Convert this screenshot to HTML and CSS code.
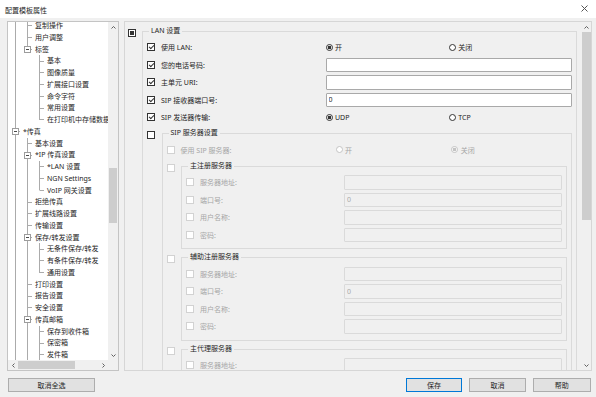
FILE: index.html
```html
<!DOCTYPE html>
<html lang="zh-CN">
<head>
    <meta charset="UTF-8">
    <title>配置模板属性</title>
    <link rel="stylesheet" href="styles.css">
</head>
<body>
<div class="window">
    <div class="titlebar">
        <span>配置模板属性</span>
        <svg class="close" width="7" height="7" viewBox="0 0 7 7"><path d="M0.5 0.5L6.5 6.5M6.5 0.5L0.5 6.5" stroke="#555" stroke-width="1"/></svg>
    </div>

    <div class="main">
        <!-- left: template tree -->
        <div class="tree">
            <div class="tree-view">
                <div class="tree-list">
                    <div class="tn"><i class="g v"></i><i class="c mid"></i><span>复制操作</span></div>
                    <div class="tn"><i class="g v"></i><i class="c mid"></i><span>用户调整</span></div>
                    <div class="tn"><i class="g v"></i><i class="c end exp"><b></b></i><span>标签</span></div>
                    <div class="tn"><i class="g v"></i><i class="g"></i><i class="c mid"></i><span>基本</span></div>
                    <div class="tn"><i class="g v"></i><i class="g"></i><i class="c mid"></i><span>图像质量</span></div>
                    <div class="tn"><i class="g v"></i><i class="g"></i><i class="c mid"></i><span>扩展接口设置</span></div>
                    <div class="tn"><i class="g v"></i><i class="g"></i><i class="c mid"></i><span>命令字符</span></div>
                    <div class="tn"><i class="g v"></i><i class="g"></i><i class="c mid"></i><span>常用设置</span></div>
                    <div class="tn"><i class="g v"></i><i class="g"></i><i class="c end"></i><span>在打印机中存储数据</span></div>
                    <div class="tn"><i class="c mid exp"><b></b></i><span>*传真</span></div>
                    <div class="tn"><i class="g v"></i><i class="c mid"></i><span>基本设置</span></div>
                    <div class="tn"><i class="g v"></i><i class="c mid exp"><b></b></i><span>*IP 传真设置</span></div>
                    <div class="tn"><i class="g v"></i><i class="g v"></i><i class="c mid"></i><span>*LAN 设置</span></div>
                    <div class="tn"><i class="g v"></i><i class="g v"></i><i class="c mid"></i><span>NGN Settings</span></div>
                    <div class="tn"><i class="g v"></i><i class="g v"></i><i class="c end"></i><span>VoIP 网关设置</span></div>
                    <div class="tn"><i class="g v"></i><i class="c mid"></i><span>拒绝传真</span></div>
                    <div class="tn"><i class="g v"></i><i class="c mid"></i><span>扩展线路设置</span></div>
                    <div class="tn"><i class="g v"></i><i class="c mid"></i><span>传输设置</span></div>
                    <div class="tn"><i class="g v"></i><i class="c mid exp"><b></b></i><span>保存/转发设置</span></div>
                    <div class="tn"><i class="g v"></i><i class="g v"></i><i class="c mid"></i><span>无条件保存/转发</span></div>
                    <div class="tn"><i class="g v"></i><i class="g v"></i><i class="c mid"></i><span>有条件保存/转发</span></div>
                    <div class="tn"><i class="g v"></i><i class="g v"></i><i class="c end"></i><span>通用设置</span></div>
                    <div class="tn"><i class="g v"></i><i class="c mid"></i><span>打印设置</span></div>
                    <div class="tn"><i class="g v"></i><i class="c mid"></i><span>报告设置</span></div>
                    <div class="tn"><i class="g v"></i><i class="c mid"></i><span>安全设置</span></div>
                    <div class="tn"><i class="g v"></i><i class="c mid exp"><b></b></i><span>传真邮箱</span></div>
                    <div class="tn"><i class="g v"></i><i class="g v"></i><i class="c mid"></i><span>保存到收件箱</span></div>
                    <div class="tn"><i class="g v"></i><i class="g v"></i><i class="c mid"></i><span>保密箱</span></div>
                    <div class="tn"><i class="g v"></i><i class="g v"></i><i class="c mid"></i><span>发件箱</span></div>
                </div>
            </div>
            <div class="vscroll">
                <div class="arrow"><svg width="5" height="3" viewBox="0 0 5 3"><path d="M0.5 2.5L2.5 0.5L4.5 2.5" fill="none" stroke="#606060"/></svg></div>
                <div class="track"><div class="thumb tree-thumb"></div></div>
                <div class="arrow"><svg width="5" height="3" viewBox="0 0 5 3"><path d="M0.5 0.5L2.5 2.5L4.5 0.5" fill="none" stroke="#606060"/></svg></div>
            </div>
            <div class="hscroll">
                <div class="arrow"><svg width="3" height="5" viewBox="0 0 3 5"><path d="M2.5 0.5L0.5 2.5L2.5 4.5" fill="none" stroke="#606060"/></svg></div>
                <div class="track"><div class="hthumb"></div></div>
                <div class="arrow"><svg width="3" height="5" viewBox="0 0 3 5"><path d="M0.5 0.5L2.5 2.5L0.5 4.5" fill="none" stroke="#606060"/></svg></div>
            </div>
            <div class="corner"></div>
        </div>

        <!-- right: settings of the selected node -->
        <div class="settings">
            <div class="settings-body">
                <div class="grouprow">
                    <span class="cb mixed"></span>
                    <div class="group">
                        <div class="group-title">LAN 设置</div>
                        <div class="group-body">
                            <div class="row">
                                <span class="cb on"></span>
                                <span class="label">使用 LAN:</span>
                                <div class="value v-lan radios">
                                    <span class="radio"><i class="dot on"></i>开</span>
                                    <span class="radio"><i class="dot"></i>关闭</span>
                                </div>
                            </div>
                            <div class="row">
                                <span class="cb on"></span>
                                <span class="label">您的电话号码:</span>
                                <input class="value v-lan field" type="text">
                            </div>
                            <div class="row">
                                <span class="cb on"></span>
                                <span class="label">主单元 URI:</span>
                                <input class="value v-lan field" type="text">
                            </div>
                            <div class="row">
                                <span class="cb on"></span>
                                <span class="label">SIP 接收器端口号:</span>
                                <input class="value v-lan field" type="text" value="0">
                            </div>
                            <div class="row">
                                <span class="cb on"></span>
                                <span class="label">SIP 发送器传输:</span>
                                <div class="value v-lan radios">
                                    <span class="radio"><i class="dot on"></i>UDP</span>
                                    <span class="radio"><i class="dot"></i>TCP</span>
                                </div>
                            </div>

                            <div class="grouprow">
                                <span class="cb"></span>
                                <div class="group">
                                    <div class="group-title">SIP 服务器设置</div>
                                    <div class="group-body">
                                        <div class="row off">
                                            <span class="cb"></span>
                                            <span class="label">使用 SIP 服务器:</span>
                                            <div class="value v-sip radios">
                                                <span class="radio"><i class="dot"></i>开</span>
                                                <span class="radio"><i class="dot on"></i>关闭</span>
                                            </div>
                                        </div>

                                        <div class="grouprow off">
                                            <span class="cb"></span>
                                            <div class="group">
                                                <div class="group-title">主注册服务器</div>
                                                <div class="group-body">
                                                    <div class="row"><span class="cb"></span><span class="label">服务器地址:</span><input class="value v-sub field" type="text" disabled></div>
                                                    <div class="row"><span class="cb"></span><span class="label">端口号:</span><input class="value v-sub field" type="text" value="0" disabled></div>
                                                    <div class="row"><span class="cb"></span><span class="label">用户名称:</span><input class="value v-sub field" type="text" disabled></div>
                                                    <div class="row"><span class="cb"></span><span class="label">密码:</span><input class="value v-sub field" type="password" disabled></div>
                                                </div>
                                            </div>
                                        </div>

                                        <div class="grouprow off">
                                            <span class="cb"></span>
                                            <div class="group">
                                                <div class="group-title">辅助注册服务器</div>
                                                <div class="group-body">
                                                    <div class="row"><span class="cb"></span><span class="label">服务器地址:</span><input class="value v-sub field" type="text" disabled></div>
                                                    <div class="row"><span class="cb"></span><span class="label">端口号:</span><input class="value v-sub field" type="text" value="0" disabled></div>
                                                    <div class="row"><span class="cb"></span><span class="label">用户名称:</span><input class="value v-sub field" type="text" disabled></div>
                                                    <div class="row"><span class="cb"></span><span class="label">密码:</span><input class="value v-sub field" type="password" disabled></div>
                                                </div>
                                            </div>
                                        </div>

                                        <div class="grouprow off">
                                            <span class="cb"></span>
                                            <div class="group">
                                                <div class="group-title">主代理服务器</div>
                                                <div class="group-body">
                                                    <div class="row"><span class="cb"></span><span class="label">服务器地址:</span><input class="value v-sub field" type="text" disabled></div>
                                                    <div class="row"><span class="cb"></span><span class="label">端口号:</span><input class="value v-sub field" type="text" value="0" disabled></div>
                                                    <div class="row"><span class="cb"></span><span class="label">用户名称:</span><input class="value v-sub field" type="text" disabled></div>
                                                    <div class="row"><span class="cb"></span><span class="label">密码:</span><input class="value v-sub field" type="password" disabled></div>
                                                </div>
                                            </div>
                                        </div>
                                    </div>
                                </div>
                            </div>
                        </div>
                    </div>
                </div>
            </div>
            <div class="vscroll">
                <div class="arrow"><svg width="5" height="3" viewBox="0 0 5 3"><path d="M0.5 2.5L2.5 0.5L4.5 2.5" fill="none" stroke="#606060"/></svg></div>
                <div class="track"><div class="thumb settings-thumb"></div></div>
                <div class="arrow"><svg width="5" height="3" viewBox="0 0 5 3"><path d="M0.5 0.5L2.5 2.5L4.5 0.5" fill="none" stroke="#606060"/></svg></div>
            </div>
        </div>
    </div>

    <div class="footer">
        <button class="btn btn-wide">取消全选</button>
        <button class="btn btn-default">保存</button>
        <button class="btn">取消</button>
        <button class="btn btn-last">帮助</button>
    </div>
</div>
</body>
</html>
```

FILE: styles.css
```css
* {
    box-sizing: border-box;
}
body {
    margin: 0;
    background-color: #f0f0f0;
    font-family: "Noto Sans", "Noto Sans CJK SC", sans-serif;
    font-size: 7px;
    color: #1e1e1e;
}
.window {
    width: 596px;
    height: 397px;
    overflow: hidden;
}
.titlebar {
    height: 18px;
    background-color: #fff;
    display: flex;
    align-items: center;
    justify-content: space-between;
    padding: 2px 8px 0 5px;
}
.titlebar .close {
    margin-bottom: 3px;
}
.main {
    display: flex;
    gap: 5px;
    padding: 3px 4px 0 7px;
    height: 353px;
}

/* tree */
.tree {
    --ln: #ababab;
    width: 112px;
    height: 350px;
    border: 1px solid #c4c4c4;
    background-color: #fff;
    display: grid;
    grid-template-columns: 1fr 10px;
    grid-template-rows: 1fr 10px;
}
.tree-view {
    overflow: hidden;
    min-height: 0;
}
.tree-list {
    margin-top: -2px;
}
.tn {
    display: flex;
    height: 11.75px;
    white-space: nowrap;
}
.tn i {
    flex: none;
    width: 12px;
}
.tn span {
    padding-left: 3px;
    line-height: 11.75px;
}
.g.v {
    background: linear-gradient(var(--ln), var(--ln)) 7px 0 / 1px 100% no-repeat;
}
.c.mid {
    background:
        linear-gradient(var(--ln), var(--ln)) 7px 0 / 1px 100% no-repeat,
        linear-gradient(var(--ln), var(--ln)) 8px 50% / 4px 1px no-repeat;
}
.c.end {
    background:
        linear-gradient(var(--ln), var(--ln)) 7px 0 / 1px 50% no-repeat,
        linear-gradient(var(--ln), var(--ln)) 8px 50% / 4px 1px no-repeat;
}
.c.exp {
    display: flex;
    align-items: center;
}
.c.exp b {
    width: 7px;
    height: 7px;
    margin-left: 4px;
    border: 1px solid #9c9c9c;
    background: linear-gradient(#4a4a4a, #4a4a4a) center / 3px 1px no-repeat, #fff;
}

/* scrollbars */
.vscroll {
    width: 10px;
    display: flex;
    flex-direction: column;
    background-color: #f0f0f0;
}
.hscroll {
    height: 10px;
    display: flex;
    background-color: #f0f0f0;
}
.corner {
    background-color: #f0f0f0;
}
.arrow {
    flex: none;
    width: 10px;
    height: 10px;
    display: flex;
    align-items: center;
    justify-content: center;
}
.track {
    flex: 1;
    min-height: 0;
}
.thumb {
    width: 8px;
    margin: 0 auto;
    background-color: #cdcdcd;
}
.tree-thumb {
    margin-top: 136px;
    height: 55px;
}
.settings-thumb {
    width: 9px;
    height: 188px;
}
.hthumb {
    width: 57px;
    height: 8px;
    margin-top: 1px;
    background-color: #cdcdcd;
}

/* settings panel */
.settings {
    width: 468px;
    height: 350px;
    border: 1px solid #d6d6d6;
    display: flex;
}
.settings-body {
    flex: 1;
    min-width: 0;
    overflow: hidden;
    padding: 6.5px 4px 0 2.5px;
}
.grouprow {
    display: flex;
    align-items: flex-start;
    gap: 6.5px;
}
.row + .grouprow {
    margin-top: 5px;
}
.grouprow + .grouprow {
    margin-top: 6px;
}
.group {
    flex: 1;
    margin-top: 2px;
    border: 1px solid #dadada;
    padding: 0 4px 4.5px;
}
.group-title {
    width: fit-content;
    height: 11px;
    line-height: 11px;
    margin: -7px 0 0 2px;
    padding: 0 2px;
    background-color: #f0f0f0;
    color: #1e1e1e;
}
.group-body {
    padding-top: 3px;
}
.row {
    display: flex;
    align-items: center;
    height: 17.5px;
}
.row .cb {
    margin-right: 6px;
}
.label {
    flex: 1;
    white-space: nowrap;
}
.value {
    flex: none;
}
.v-lan {
    width: 246.5px;
}
.v-sip {
    width: 231.5px;
}
.v-sub {
    width: 218px;
}
.radios {
    display: grid;
    grid-template-columns: 1fr 1fr;
}
.radio {
    display: flex;
    align-items: center;
    gap: 2.5px;
}
.dot {
    width: 7px;
    height: 7px;
    border-radius: 50%;
    border: 1px solid #333;
    background-color: #fff;
}
.dot.on {
    background: radial-gradient(circle, #333 0 1.6px, #fff 2.1px);
}
.field {
    height: 14.5px;
    border: 1px solid #a9a9a9;
    border-radius: 1px;
    padding: 0 2px;
    background-color: #fff;
    font: inherit;
    color: #1e1e1e;
    outline: none;
    margin: 0;
}
.field:disabled {
    background-color: #f0f0f0;
    border-color: #dadada;
    color: #a8a8a8;
}

/* checkboxes */
.cb {
    flex: none;
    width: 8px;
    height: 8px;
    border: 1px solid #333;
    background-color: #fff;
    display: flex;
    align-items: center;
    justify-content: center;
}
.cb.on::after {
    content: "";
    width: 2px;
    height: 4px;
    margin-top: -1px;
    border: solid #333;
    border-width: 0 1px 1px 0;
    transform: rotate(45deg);
}
.cb.mixed::after {
    content: "";
    width: 4px;
    height: 4px;
    background-color: #333;
}
.off .label,
.off .radio {
    color: #a6a6a6;
}
.off .cb {
    border-color: #d2d2d2;
}
.off .group-title {
    color: #1e1e1e;
}
.off .dot {
    border-color: #c4c4c4;
}
.off .dot.on {
    background: radial-gradient(circle, #c4c4c4 0 1.6px, #fff 2.1px);
}

/* footer buttons */
.footer {
    display: flex;
    align-items: flex-start;
    gap: 7px;
    padding: 6.5px 5.5px 0 8px;
    height: 26px;
}
.btn {
    width: 57px;
    height: 14px;
    padding: 0;
    border: 1px solid #adadad;
    background-color: #e1e1e1;
    font: inherit;
    color: #1e1e1e;
}
.btn-wide {
    width: 87px;
    margin-right: auto;
}
.btn-default {
    width: 56px;
    border-color: #0078d7;
}
.btn-last {
    width: 57.5px;
}
```
